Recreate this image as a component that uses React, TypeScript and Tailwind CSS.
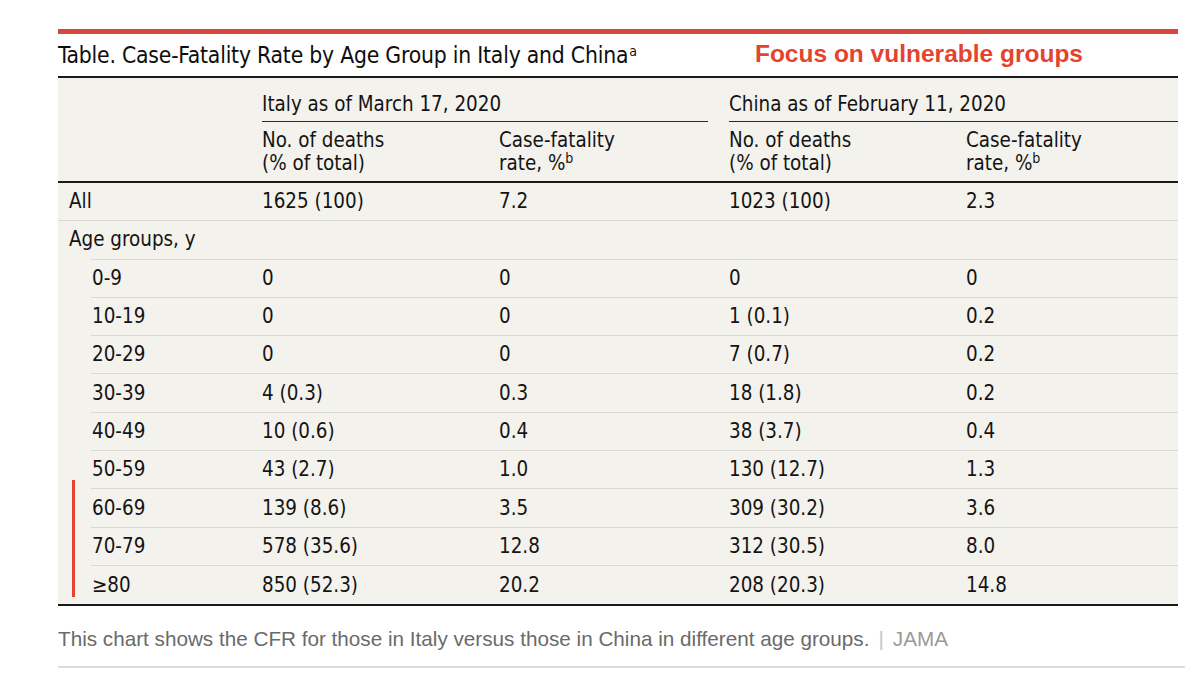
import React from "react";

type Row = {
  label: string;
  itDeaths: string;
  itRate: string;
  cnDeaths: string;
  cnRate: string;
};

const ageRows: Row[] = [
  { label: "0-9", itDeaths: "0", itRate: "0", cnDeaths: "0", cnRate: "0" },
  { label: "10-19", itDeaths: "0", itRate: "0", cnDeaths: "1 (0.1)", cnRate: "0.2" },
  { label: "20-29", itDeaths: "0", itRate: "0", cnDeaths: "7 (0.7)", cnRate: "0.2" },
  { label: "30-39", itDeaths: "4 (0.3)", itRate: "0.3", cnDeaths: "18 (1.8)", cnRate: "0.2" },
  { label: "40-49", itDeaths: "10 (0.6)", itRate: "0.4", cnDeaths: "38 (3.7)", cnRate: "0.4" },
  { label: "50-59", itDeaths: "43 (2.7)", itRate: "1.0", cnDeaths: "130 (12.7)", cnRate: "1.3" },
  { label: "60-69", itDeaths: "139 (8.6)", itRate: "3.5", cnDeaths: "309 (30.2)", cnRate: "3.6" },
  { label: "70-79", itDeaths: "578 (35.6)", itRate: "12.8", cnDeaths: "312 (30.5)", cnRate: "8.0" },
  { label: "≥80", itDeaths: "850 (52.3)", itRate: "20.2", cnDeaths: "208 (20.3)", cnRate: "14.8" },
];

// value cells share the same fixed widths in every row
const Cells = ({ r }: { r: Row }) => (
  <>
    <div className="w-[237px] shrink-0">{r.itDeaths}</div>
    <div className="w-[230px] shrink-0">{r.itRate}</div>
    <div className="w-[237px] shrink-0">{r.cnDeaths}</div>
    <div className="flex-1">{r.cnRate}</div>
  </>
);

const App = () => {
  return (
    <div className="w-[1200px] h-[683px] bg-white pt-[29px] pl-[58px] pr-[22px] font-['DejaVu_Sans_Condensed','Liberation_Sans',sans-serif] text-[#141414]">
      <div className="h-[5px] bg-[#d9463b]" />

      {/* title line */}
      <div className="h-[44px] flex items-center justify-between border-b-2 border-[#1a1a1a]">
        <div className="text-[22.7px] tracking-[-0.2px] text-[#0e0e0e]">
          Table. Case-Fatality Rate by Age Group in Italy and China
          <sup className="text-[14px] ml-[1px]">a</sup>
        </div>
        <div className="mr-[95px] mb-[2px] font-['Liberation_Sans',Arial,sans-serif] font-bold text-[24.5px] text-[#e5432f]">
          Focus on vulnerable groups
        </div>
      </div>

      <div className="bg-[#f4f2ec] text-[20.4px] leading-[23px]">
        {/* group headers */}
        <div className="flex h-[44px]">
          <div className="w-[204px] shrink-0" />
          <div className="w-[446px] shrink-0 mr-[21px] border-b-[1.5px] border-[#2a2a2a] flex items-end pb-[5px]">
            Italy as of March 17, 2020
          </div>
          <div className="flex-1 border-b-[1.5px] border-[#2a2a2a] flex items-end pb-[5px]">
            China as of February 11, 2020
          </div>
        </div>

        {/* column headers */}
        <div className="flex h-[61px] pt-[7px] border-b-2 border-[#1a1a1a]">
          <div className="w-[204px] shrink-0" />
          <div className="w-[237px] shrink-0">
            No. of deaths
            <br />
            (% of total)
          </div>
          <div className="w-[230px] shrink-0">
            Case-fatality
            <br />
            rate, %<sup className="text-[14px]">b</sup>
          </div>
          <div className="w-[237px] shrink-0">
            No. of deaths
            <br />
            (% of total)
          </div>
          <div className="flex-1">
            Case-fatality
            <br />
            rate, %<sup className="text-[14px]">b</sup>
          </div>
        </div>

        {/* all */}
        <div className="flex items-center h-[38.3px] border-b border-[#d9d7cf]">
          <div className="w-[204px] shrink-0 pl-[11px]">All</div>
          <Cells r={{ label: "All", itDeaths: "1625 (100)", itRate: "7.2", cnDeaths: "1023 (100)", cnRate: "2.3" }} />
        </div>

        <div className="ml-[33px] flex items-center h-[38.3px] border-b border-[#d9d7cf]">
          <div className="-ml-[22px] whitespace-nowrap">Age groups, y</div>
        </div>

        <div className="relative">
          {/* highlight for the older groups */}
          <div className="absolute left-[14px] top-[220px] w-[3px] h-[117px] bg-[#e2452f]" />
          {ageRows.map((r, i) => (
            <div
              key={r.label}
              className={
                i === ageRows.length - 1
                  ? "ml-[33px] flex items-center h-[38.3px]"
                  : "ml-[33px] flex items-center h-[38.3px] border-b border-[#d9d7cf]"
              }
            >
              <div className="w-[171px] shrink-0 pl-[1px]">{r.label}</div>
              <Cells r={r} />
            </div>
          ))}
        </div>
      </div>
      <div className="h-[2px] bg-[#1a1a1a]" />

      <div className="pt-[20px] pb-[14px] font-['Liberation_Sans',Arial,sans-serif] text-[20.7px] leading-[26px] text-[#6a6a6a]">
        This chart shows the CFR for those in Italy versus those in China in different age groups.
        <span className="mx-[9px] text-[#c4c4c4]">|</span>
        <span className="text-[#9a9a9a]">JAMA</span>
      </div>
      <div className="h-[2px] bg-[#dedede] -mr-[7px]" />
    </div>
  );
};

export default App;
